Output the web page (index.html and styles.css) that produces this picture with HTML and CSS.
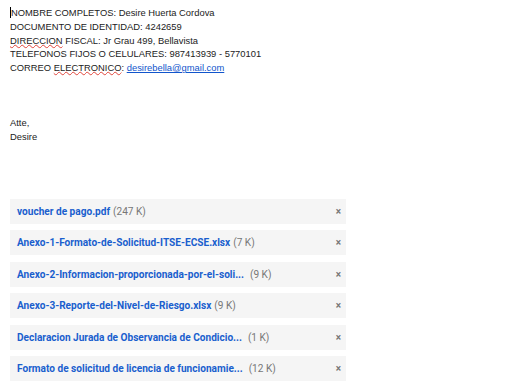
FILE: index.html
```html
<!DOCTYPE html>
<html>
<head>
<meta charset="utf-8">
<link rel="stylesheet" href="styles.css">
</head>
<body>
<div class="body-text">
  <div class="line"><span class="caret"></span>NOMBRE COMPLETOS: Desire Huerta Cordova</div>
  <div class="line">DOCUMENTO DE IDENTIDAD: 4242659</div>
  <div class="line"><span class="spell">DIRECCION</span> FISCAL: Jr Grau 499, Bellavista</div>
  <div class="line">TELEFONOS FIJOS O CELULARES: 987413939 - 5770101</div>
  <div class="line">CORREO <span class="spell">ELECTRONICO</span>: <a class="link" href="#">desirebella@gmail.com</a></div>
  <div class="line">&nbsp;</div>
  <div class="line">&nbsp;</div>
  <div class="line">&nbsp;</div>
  <div class="line">Atte,</div>
  <div class="line">Desire</div>
</div>
<div class="attachments">
  <div class="att"><span class="name">voucher de pago.pdf</span><span class="size">(247 K)</span><span class="x">×</span></div>
  <div class="att"><span class="name">Anexo-1-Formato-de-Solicitud-ITSE-ECSE.xlsx</span><span class="size">(7 K)</span><span class="x">×</span></div>
  <div class="att"><span class="name">Anexo-2-Informacion-proporcionada-por-el-soli...</span><span class="size gap">(9 K)</span><span class="x">×</span></div>
  <div class="att"><span class="name">Anexo-3-Reporte-del-Nivel-de-Riesgo.xlsx</span><span class="size">(9 K)</span><span class="x">×</span></div>
  <div class="att"><span class="name">Declaracion Jurada de Observancia de Condicio...</span><span class="size gap">(1 K)</span><span class="x">×</span></div>
  <div class="att"><span class="name">Formato de solicitud de licencia de funcionamie...</span><span class="size gap">(12 K)</span><span class="x">×</span></div>
</div>
</body>
</html>
```
FILE: styles.css
```css
html, body {
  margin: 0;
  padding: 0;
  background: #fff;
}
body {
  padding: 6px 10px 0 10px;
}
.body-text {
  font-family: "Liberation Sans", Arial, sans-serif;
  font-size: 9.4px;
  line-height: 13.8px;
  color: #222;
}
.caret {
  display: inline-block;
  width: 1px;
  height: 11px;
  background: #000;
  vertical-align: -2px;
}
.spell {
  text-decoration: underline wavy #e0443a;
  text-decoration-thickness: 1px;
  text-underline-offset: 0;
}
.link {
  color: #1155cc;
  text-decoration: underline;
}
.attachments {
  margin-top: 55px;
  display: flex;
  flex-direction: column;
  gap: 6.4px;
  width: 336px;
}
.att {
  height: 25px;
  background: #f5f5f5;
  display: flex;
  align-items: center;
  padding: 0 5px 0 7px;
  font-family: Roboto, "Liberation Sans", Arial, sans-serif;
  font-size: 10.1px;
}
.name {
  color: #1a5fce;
  font-weight: bold;
  white-space: nowrap;
}
.size {
  color: #777;
  margin-left: 3px;
}
.size.gap {
  margin-left: 6px;
}
.x {
  margin-left: auto;
  color: #777;
  font-weight: bold;
  font-size: 10px;
}
```
